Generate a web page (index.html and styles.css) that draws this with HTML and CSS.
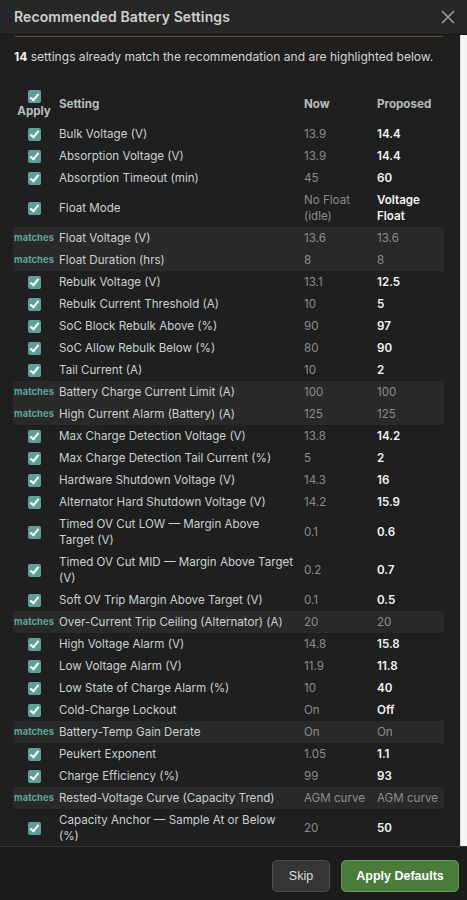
FILE: index.html
```html
<!DOCTYPE html>
<html lang="en">
<head>
<meta charset="utf-8">
<title>Recommended Battery Settings</title>
<link rel="stylesheet" href="styles.css">
</head>
<body>
<div class="modal">
  <header class="head">
    <h1 class="title">Recommended Battery Settings</h1>
    <button class="close" aria-label="Close">
      <svg width="14" height="14" viewBox="0 0 14 14"><path d="M1 1 L13 13 M13 1 L1 13" stroke="#9a9a9a" stroke-width="1.6" fill="none"/></svg>
    </button>
  </header>
  <div class="body">
    <div class="scroll">
      <div class="notice-edge"></div>
      <p class="intro"><b>14</b> settings already match the recommendation and are highlighted below.</p>
      <table class="grid">
        <colgroup><col class="c-apply"><col class="c-set"><col class="c-now"><col class="c-prop"></colgroup>
        <thead>
          <tr>
            <th class="apply-h"><span class="cb"></span><span class="apply-lbl">Apply</span></th>
            <th>Setting</th><th>Now</th><th>Proposed</th>
          </tr>
        </thead>
        <tbody>
          <tr><td class="ap"><span class="cb"></span></td><td>Bulk Voltage (V)</td><td class="now">13.9</td><td class="prop">14.4</td></tr>
          <tr><td class="ap"><span class="cb"></span></td><td>Absorption Voltage (V)</td><td class="now">13.9</td><td class="prop">14.4</td></tr>
          <tr><td class="ap"><span class="cb"></span></td><td>Absorption Timeout (min)</td><td class="now">45</td><td class="prop">60</td></tr>
          <tr><td class="ap"><span class="cb"></span></td><td>Float Mode</td><td class="now">No Float (idle)</td><td class="prop">Voltage Float</td></tr>
          <tr class="match"><td class="ap"><span class="mt">matches</span></td><td>Float Voltage (V)</td><td class="now">13.6</td><td class="now">13.6</td></tr>
          <tr class="match"><td class="ap"><span class="mt">matches</span></td><td>Float Duration (hrs)</td><td class="now">8</td><td class="now">8</td></tr>
          <tr><td class="ap"><span class="cb"></span></td><td>Rebulk Voltage (V)</td><td class="now">13.1</td><td class="prop">12.5</td></tr>
          <tr><td class="ap"><span class="cb"></span></td><td>Rebulk Current Threshold (A)</td><td class="now">10</td><td class="prop">5</td></tr>
          <tr><td class="ap"><span class="cb"></span></td><td>SoC Block Rebulk Above (%)</td><td class="now">90</td><td class="prop">97</td></tr>
          <tr><td class="ap"><span class="cb"></span></td><td>SoC Allow Rebulk Below (%)</td><td class="now">80</td><td class="prop">90</td></tr>
          <tr><td class="ap"><span class="cb"></span></td><td>Tail Current (A)</td><td class="now">10</td><td class="prop">2</td></tr>
          <tr class="match"><td class="ap"><span class="mt">matches</span></td><td>Battery Charge Current Limit (A)</td><td class="now">100</td><td class="now">100</td></tr>
          <tr class="match"><td class="ap"><span class="mt">matches</span></td><td>High Current Alarm (Battery) (A)</td><td class="now">125</td><td class="now">125</td></tr>
          <tr><td class="ap"><span class="cb"></span></td><td>Max Charge Detection Voltage (V)</td><td class="now">13.8</td><td class="prop">14.2</td></tr>
          <tr><td class="ap"><span class="cb"></span></td><td>Max Charge Detection Tail Current (%)</td><td class="now">5</td><td class="prop">2</td></tr>
          <tr><td class="ap"><span class="cb"></span></td><td>Hardware Shutdown Voltage (V)</td><td class="now">14.3</td><td class="prop">16</td></tr>
          <tr><td class="ap"><span class="cb"></span></td><td>Alternator Hard Shutdown Voltage (V)</td><td class="now">14.2</td><td class="prop">15.9</td></tr>
          <tr><td class="ap"><span class="cb"></span></td><td>Timed OV Cut LOW — Margin Above Target (V)</td><td class="now">0.1</td><td class="prop">0.6</td></tr>
          <tr><td class="ap"><span class="cb"></span></td><td>Timed OV Cut MID — Margin Above Target (V)</td><td class="now">0.2</td><td class="prop">0.7</td></tr>
          <tr><td class="ap"><span class="cb"></span></td><td>Soft OV Trip Margin Above Target (V)</td><td class="now">0.1</td><td class="prop">0.5</td></tr>
          <tr class="match"><td class="ap"><span class="mt">matches</span></td><td>Over-Current Trip Ceiling (Alternator) (A)</td><td class="now">20</td><td class="now">20</td></tr>
          <tr><td class="ap"><span class="cb"></span></td><td>High Voltage Alarm (V)</td><td class="now">14.8</td><td class="prop">15.8</td></tr>
          <tr><td class="ap"><span class="cb"></span></td><td>Low Voltage Alarm (V)</td><td class="now">11.9</td><td class="prop">11.8</td></tr>
          <tr><td class="ap"><span class="cb"></span></td><td>Low State of Charge Alarm (%)</td><td class="now">10</td><td class="prop">40</td></tr>
          <tr><td class="ap"><span class="cb"></span></td><td>Cold-Charge Lockout</td><td class="now">On</td><td class="prop">Off</td></tr>
          <tr class="match"><td class="ap"><span class="mt">matches</span></td><td>Battery-Temp Gain Derate</td><td class="now">On</td><td class="now">On</td></tr>
          <tr><td class="ap"><span class="cb"></span></td><td>Peukert Exponent</td><td class="now">1.05</td><td class="prop">1.1</td></tr>
          <tr><td class="ap"><span class="cb"></span></td><td>Charge Efficiency (%)</td><td class="now">99</td><td class="prop">93</td></tr>
          <tr class="match"><td class="ap"><span class="mt">matches</span></td><td>Rested-Voltage Curve (Capacity Trend)</td><td class="now">AGM curve</td><td class="now">AGM curve</td></tr>
          <tr><td class="ap"><span class="cb"></span></td><td>Capacity Anchor — Sample At or Below (%)</td><td class="now">20</td><td class="prop">50</td></tr>
        </tbody>
      </table>
    </div>
    <div class="track"></div>
  </div>
  <footer class="foot">
    <button class="btn skip">Skip</button>
    <button class="btn primary">Apply Defaults</button>
  </footer>
</div>
</body>
</html>
```

FILE: styles.css
```css
* { box-sizing: border-box; }

html, body {
  margin: 0;
  padding: 0;
  background: #1f1f1f;
  font-family: Inter, "Liberation Sans", sans-serif;
  color: #c9d1d1;
}

.modal {
  width: 467px;
  height: 900px;
  display: flex;
  flex-direction: column;
  overflow: hidden;
}

.head {
  height: 35px;
  flex: none;
  display: flex;
  align-items: center;
  justify-content: space-between;
  padding: 0 12px 1px 14px;
  background: #272727;
  border-bottom: 1px solid #151515;
}

.title {
  margin: 0;
  font-size: 14px;
  font-weight: 600;
  color: #cfcfcf;
  letter-spacing: 0.1px;
}

.close {
  background: none;
  border: 0;
  padding: 0;
  width: 14px;
  height: 14px;
  display: flex;
}

.body {
  height: 811px;
  flex: none;
  display: flex;
}

.scroll {
  flex: 1;
  overflow: hidden;
  padding: 0 16px 0 13px;
}

.track {
  width: 7px;
  flex: none;
  background: #f4f4f4;
  border-left: 1px solid #d8d8d8;
}

.notice-edge {
  height: 2px;
  margin: 0 1px 0 2px;
  border: 1px solid #5e4d2d;
  border-top: 0;
  border-radius: 0 0 5px 5px;
}

.intro {
  margin: 12px 0 0 1px;
  font-size: 12.05px;
  line-height: 16px;
  color: #d4d4d4;
}

.intro b {
  color: #f2f2f2;
  font-weight: 700;
}

.grid {
  margin-top: 20px;
  width: 431px;
  table-layout: fixed;
  border-collapse: collapse;
  font-size: 11.6px;
  line-height: 16px;
}

.c-apply { width: 42px; }
.c-set { width: 245px; }
.c-now { width: 73px; }
.c-prop { width: 71px; }

.grid th {
  height: 38px;
  padding: 3px 4px;
  text-align: left;
  font-weight: 700;
  color: #b6bebe;
  vertical-align: middle;
}

.grid th.apply-h {
  padding: 5px 0 0;
  vertical-align: top;
  text-align: center;
}

.apply-h .cb {
  margin: 0 auto 1px;
}

.apply-lbl {
  display: block;
  line-height: 14px;
}

.grid td {
  height: 22px;
  padding: 3px 4px;
  vertical-align: middle;
  color: #c9d1d1;
}

.grid td.ap {
  padding: 0;
  text-align: center;
}

.grid td.now {
  color: #8c8c8c;
}

.grid td.prop {
  color: #f4f4f4;
  font-weight: 600;
}

.match td {
  background: #292929;
}

.cb {
  display: block;
  margin: 0 auto;
  width: 13px;
  height: 13px;
  border-radius: 2px;
  background: #5f9f99;
  position: relative;
}

.cb::after {
  content: "";
  position: absolute;
  left: 4.5px;
  top: 1.5px;
  width: 3px;
  height: 7px;
  border: solid #ffffff;
  border-width: 0 2px 2px 0;
  transform: rotate(40deg);
}

.mt {
  display: block;
  font-size: 9.3px;
  line-height: 16px;
  font-weight: 700;
  color: #5ea79f;
  letter-spacing: 0.1px;
}

.foot {
  flex: 1;
  display: flex;
  justify-content: flex-end;
  align-items: flex-start;
  gap: 11px;
  padding: 13px 8px 0 0;
  background: #1c1c1c;
  border-top: 1px solid #333333;
}

.btn {
  height: 32px;
  border-radius: 5px;
  font-family: "Liberation Sans", Arial, sans-serif;
  font-size: 12.5px;
  padding: 0;
}

.skip {
  width: 58px;
  background: #353535;
  border: 1px solid #4d4d4d;
  color: #dedede;
}

.primary {
  width: 118px;
  background: #4a7b3b;
  border: 1px solid #62a04b;
  color: #ffffff;
  font-weight: 700;
}
```
